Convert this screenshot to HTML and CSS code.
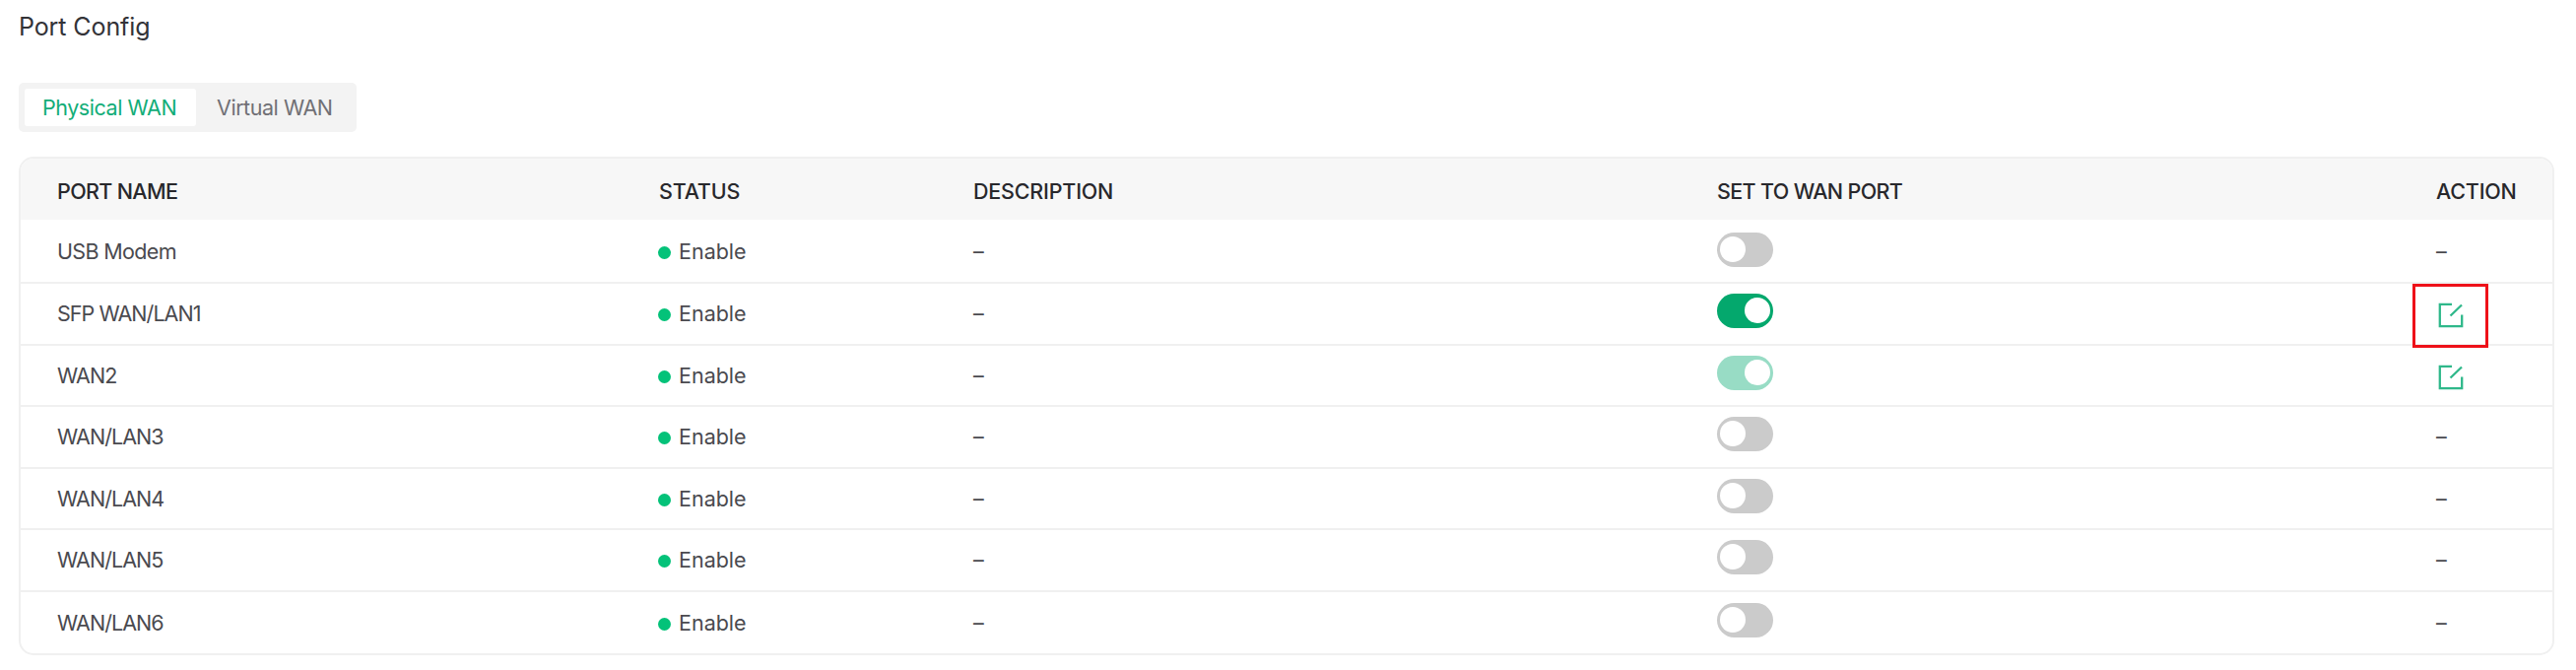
FILE: index.html
```
<!DOCTYPE html>
<html lang="en">
<head>
    <meta charset="UTF-8">
    <meta name="viewport" content="width=device-width, initial-scale=1.0">
    <title>Port Config</title>
    <link rel="stylesheet" href="styles.css">
</head>
<body>
    <h1>Port Config</h1>

    <div class="tabs">
        <button class="tab active">Physical WAN</button>
        <button class="tab">Virtual WAN</button>
    </div>

    <div class="port-table">
        <div class="row head">
            <div class="tight">PORT NAME</div>
            <div>STATUS</div>
            <div>DESCRIPTION</div>
            <div class="tight">SET TO WAN PORT</div>
            <div>ACTION</div>
        </div>
        <div class="row first">
            <div class="name modem">USB Modem</div>
            <div class="status">Enable</div>
            <div>–</div>
            <div><span class="switch"></span></div>
            <div>–</div>
        </div>
        <div class="row">
            <div class="name">SFP WAN/LAN1</div>
            <div class="status">Enable</div>
            <div>–</div>
            <div><span class="switch on"></span></div>
            <div class="action marked">
                <svg class="edit" viewBox="0 0 26 26"><path d="M14 1.8H1.8V24.2H24.2V12.5M12.5 13.5L24 2.5"/></svg>
            </div>
        </div>
        <div class="row">
            <div class="name">WAN2</div>
            <div class="status">Enable</div>
            <div>–</div>
            <div><span class="switch on disabled"></span></div>
            <div class="action">
                <svg class="edit" viewBox="0 0 26 26"><path d="M14 1.8H1.8V24.2H24.2V12.5M12.5 13.5L24 2.5"/></svg>
            </div>
        </div>
        <div class="row">
            <div class="name">WAN/LAN3</div>
            <div class="status">Enable</div>
            <div>–</div>
            <div><span class="switch"></span></div>
            <div>–</div>
        </div>
        <div class="row">
            <div class="name">WAN/LAN4</div>
            <div class="status">Enable</div>
            <div>–</div>
            <div><span class="switch"></span></div>
            <div>–</div>
        </div>
        <div class="row">
            <div class="name">WAN/LAN5</div>
            <div class="status">Enable</div>
            <div>–</div>
            <div><span class="switch"></span></div>
            <div>–</div>
        </div>
        <div class="row">
            <div class="name">WAN/LAN6</div>
            <div class="status">Enable</div>
            <div>–</div>
            <div><span class="switch"></span></div>
            <div>–</div>
        </div>
    </div>
</body>
</html>
```
FILE: styles.css
```
*, *::before, *::after {box-sizing: border-box;}
body {margin: 0; padding: 9px 22px 0 19px; background: #ffffff; color: #4a4a4f; font-family: Inter, "Noto Sans", sans-serif; font-size: 21.5px;}
h1 {margin: 0; font-size: 25px; font-weight: 400; line-height: 36px; color: #333338; letter-spacing: -0.1px;}

/* Tabs */
.tabs {display: flex; width: 343px; height: 50px; margin-top: 39px; padding: 6px; background: #f3f3f3; border-radius: 5px;}
.tab {
    padding: 0 0 0 19px;
    border: 0;
    border-radius: 3px;
    background: none;
    color: #707075;
    font: 400 21.5px Inter, "Noto Sans", sans-serif;
    letter-spacing: -0.45px;
    text-align: left;
    white-space: nowrap;
}
.tab.active {width: 174px; margin-right: 2px; padding-left: 18px; background: #ffffff; color: #12ad78;}

/* Table */
.port-table {margin-top: 25px; border: 2px solid #f0f0f0; border-radius: 15px; overflow: hidden;}
.row {
    display: grid;
    grid-template-columns: 611px 319px 755px 730px 1fr;
    align-items: center;
    height: 62.5px;
    padding-left: 37px;
    border-bottom: 2px solid #f0f0f0;
    font-weight: 400;
    white-space: nowrap;
}
.row:last-child {height: 62.5px; border-bottom: 0;}
.head {height: 62px; background: #f7f7f7; border-bottom: 0; color: #28282c; font-weight: 500; padding-top: 3px; letter-spacing: -0.2px;}
.head .tight {letter-spacing: -0.65px;}
.first {height: 65px;}
.name {letter-spacing: -0.95px;}
.modem {letter-spacing: -0.65px;}

.status {display: flex; align-items: center; gap: 8px;}
.status::before {content: ""; width: 13px; height: 13px; margin: 3px 0 0 -1px; border-radius: 50%; background: #04c279;}

.switch {display: block; width: 57px; height: 35px; margin: 0 0 5px; padding: 4px 3px; border-radius: 18px; background: #cbcbcb;}
.switch::after {content: ""; display: block; width: 26px; height: 26px; border-radius: 50%; background: #ffffff;}
.first .switch {margin-bottom: 3px;}
.switch.on {background: #04a86d;}
.switch.on::after {margin-left: 25px;}
.switch.disabled {background: #98dcc5;}

.action {position: relative; display: flex; align-items: center; height: 100%;}
.edit {width: 26px; height: 26px; margin: 4px 0 0 2px; fill: none; stroke: #2fb88a; stroke-width: 2.3;}
.marked::after {content: ""; position: absolute; left: -24px; top: 0; width: 77px; height: 65px; border: 3px solid #ee1119;}
```
